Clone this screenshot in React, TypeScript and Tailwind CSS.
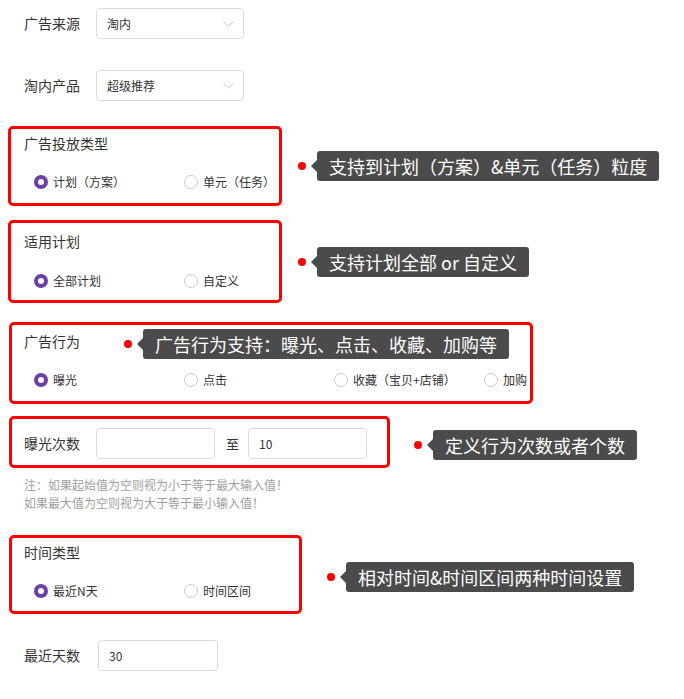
import React from "react";

type RadioOption = { label: string; checked?: boolean };

function Radio({ label, checked }: RadioOption) {
  return (
    <label className="flex h-[20px] items-center">
      <span
        className={
          checked
            ? "h-[14px] w-[14px] shrink-0 rounded-full border-[4px] border-[#6b3fa6] bg-white"
            : "h-[14px] w-[14px] shrink-0 rounded-full border border-[#c9c9c9] bg-white"
        }
      />
      <span className="ml-[5px] whitespace-nowrap text-[12px] leading-[20px] text-[#333]">{label}</span>
    </label>
  );
}

function RadioRow({ options }: { options: RadioOption[] }) {
  return (
    <div className="flex">
      {options.map((o) => (
        <div key={o.label} className="w-[150px] shrink-0">
          <Radio {...o} />
        </div>
      ))}
    </div>
  );
}

function Note({ text }: { text: string }) {
  return (
    <div className="flex items-center">
      <span className="h-[8px] w-[8px] rounded-full bg-[#ff0000]" />
      <span className="ml-[5px] h-0 w-0 border-y-[6px] border-r-[6px] border-y-transparent border-r-[#4b4b4b]" />
      <span className="h-[30px] whitespace-nowrap rounded-[3px] bg-[#4b4b4b] px-[12px] text-[18px] leading-[30px] text-white">
        {text}
      </span>
    </div>
  );
}

function Select({ value }: { value: string }) {
  return (
    <div className="flex h-[31px] w-[148px] items-center justify-between rounded-[4px] border border-[#dcdcdc] bg-white pl-[10px] pr-[9px]">
      <span className="text-[12px] text-[#333]">{value}</span>
      <svg width="11" height="6" viewBox="0 0 11 6" fill="none">
        <polyline points="0.5,0.5 5.5,5 10.5,0.5" stroke="#c4c4c4" strokeWidth="1" />
      </svg>
    </div>
  );
}

function TextBox({ value, width }: { value?: string; width: string }) {
  return (
    <input
      readOnly
      value={value ?? ""}
      className={`h-[31px] ${width} rounded-[4px] border border-[#dcdcdc] bg-white px-[10px] text-[12px] text-[#333] outline-none`}
    />
  );
}

export default function App() {
  return (
    <div className="h-[699px] w-[684px] overflow-hidden bg-white pl-[8px] pt-[8px] font-['Noto_Sans_CJK_SC','Noto_Sans',sans-serif] text-[#333]">
      <div className="flex h-[31px] items-center pl-[16px]">
        <span className="w-[72px] text-[14px]">广告来源</span>
        <Select value="淘内" />
      </div>

      <div className="mt-[31px] flex h-[31px] items-center pl-[16px]">
        <span className="w-[72px] text-[14px]">淘内产品</span>
        <Select value="超级推荐" />
      </div>

      <div className="mt-[25px] flex items-center">
        <div className="w-[274px] shrink-0 rounded-[5px] border-[3px] border-[#ff0000] pb-[11px] pl-[13px] pt-[4px]">
          <div className="h-[20px] text-[14px] leading-[20px]">广告投放类型</div>
          <div className="mt-[19px] pl-[10px]">
            <RadioRow options={[{ label: "计划（方案）", checked: true }, { label: "单元（任务）" }]} />
          </div>
        </div>
        <div className="ml-[16px]">
          <Note text="支持到计划（方案）&单元（任务）粒度" />
        </div>
      </div>

      <div className="mt-[14px] flex items-center">
        <div className="w-[274px] shrink-0 rounded-[5px] border-[3px] border-[#ff0000] pb-[9px] pl-[13px] pt-[8px]">
          <div className="h-[20px] text-[14px] leading-[20px]">适用计划</div>
          <div className="mt-[20px] pl-[10px]">
            <RadioRow options={[{ label: "全部计划", checked: true }, { label: "自定义" }]} />
          </div>
        </div>
        <div className="ml-[16px]">
          <Note text="支持计划全部 or 自定义" />
        </div>
      </div>

      <div className="ml-[1px] mt-[19px] w-[524px] overflow-hidden rounded-[5px] border-[3px] border-[#ff0000] pb-[11px] pl-[12px] pt-[6px]">
        <div className="flex h-[20px] items-center">
          <span className="w-[56px] text-[14px] leading-[20px]">广告行为</span>
          <div className="ml-[44px] translate-y-[3px]">
            <Note text="广告行为支持：曝光、点击、收藏、加购等" />
          </div>
        </div>
        <div className="mt-[19px] pl-[10px]">
          <RadioRow
            options={[
              { label: "曝光", checked: true },
              { label: "点击" },
              { label: "收藏（宝贝+店铺）" },
              { label: "加购" },
            ]}
          />
        </div>
      </div>

      <div className="mt-[12px] flex items-center">
        <div className="ml-[1px] flex w-[381px] shrink-0 items-center rounded-[5px] border-[3px] border-[#ff0000] pb-[6px] pl-[12px] pt-[9px]">
          <span className="w-[72px] text-[14px]">曝光次数</span>
          <TextBox width="w-[119px]" />
          <span className="ml-[11px] text-[13px]">至</span>
          <span className="ml-[9px] flex">
            <TextBox width="w-[119px]" value="10" />
          </span>
        </div>
        <div className="ml-[24px] mt-[6px]">
          <Note text="定义行为次数或者个数" />
        </div>
      </div>

      <div className="mt-[8px] pl-[16px] text-[12px] leading-[18px] text-[#a0a0a0]">
        <div>注：如果起始值为空则视为小于等于最大输入值！</div>
        <div>如果最大值为空则视为大于等于最小输入值！</div>
      </div>

      <div className="mt-[23px] flex items-center">
        <div className="ml-[1px] w-[293px] shrink-0 rounded-[5px] border-[3px] border-[#ff0000] pb-[10px] pl-[12px] pt-[4px]">
          <div className="h-[20px] text-[14px] leading-[20px]">时间类型</div>
          <div className="mt-[19px] pl-[10px]">
            <RadioRow options={[{ label: "最近N天", checked: true }, { label: "时间区间" }]} />
          </div>
        </div>
        <div className="ml-[25px] mt-[4px]">
          <Note text="相对时间&时间区间两种时间设置" />
        </div>
      </div>

      <div className="mt-[26px] flex h-[31px] items-center pl-[16px]">
        <span className="w-[74px] text-[14px]">最近天数</span>
        <TextBox width="w-[120px]" value="30" />
      </div>
    </div>
  );
}
